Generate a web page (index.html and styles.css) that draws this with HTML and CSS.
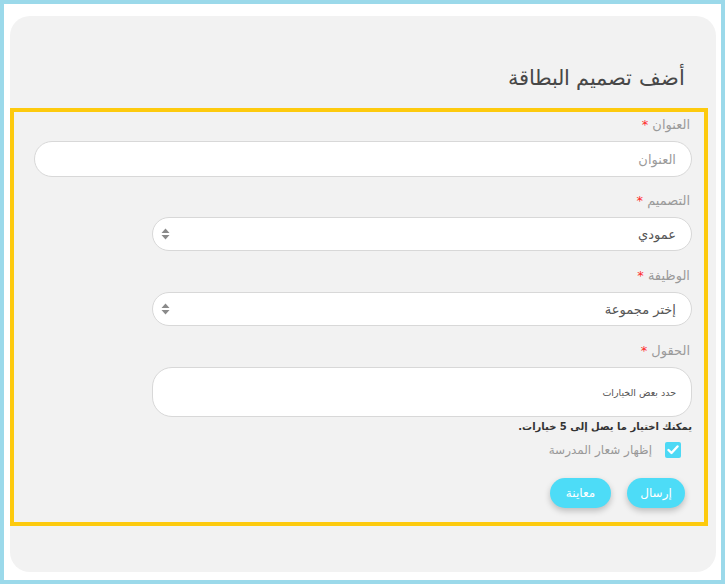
FILE: index.html
```html
<!DOCTYPE html>
<html lang="ar" dir="rtl">
<head>
<meta charset="utf-8">
<link rel="stylesheet" href="styles.css">
</head>
<body>
<div class="frame">
  <div class="panel">
    <h2 class="title">أضف تصميم البطاقة</h2>
    <form class="form-box">
      <div class="field">
        <label class="lbl">العنوان <span class="req">*</span></label>
        <div class="input wide"><span class="ph">العنوان</span></div>
      </div>
      <div class="field">
        <label class="lbl">التصميم <span class="req">*</span></label>
        <div class="input select"><span class="val">عمودي</span>
          <svg class="arrows" width="9" height="12" viewBox="0 0 9 12"><path d="M4.5 0.5 L8.5 5 L0.5 5 Z M0.5 7 L8.5 7 L4.5 11.5 Z" fill="#8a8a8a"/></svg>
        </div>
      </div>
      <div class="field">
        <label class="lbl">الوظيفة <span class="req">*</span></label>
        <div class="input select"><span class="val">إختر مجموعة</span>
          <svg class="arrows" width="9" height="12" viewBox="0 0 9 12"><path d="M4.5 0.5 L8.5 5 L0.5 5 Z M0.5 7 L8.5 7 L4.5 11.5 Z" fill="#8a8a8a"/></svg>
        </div>
      </div>
      <div class="field">
        <label class="lbl">الحقول <span class="req">*</span></label>
        <div class="input multi"><span class="ph-small">حدد بعض الخيارات</span></div>
        <p class="help">يمكنك اختيار ما يصل إلى 5 خيارات.</p>
      </div>
      <div class="check-row">
        <span class="checkbox"><svg width="12" height="10" viewBox="0 0 12 10"><path d="M1.5 5 L4.5 8 L10.5 1.5" fill="none" stroke="#fff" stroke-width="2.4" stroke-linecap="round" stroke-linejoin="round"/></svg></span>
        <span class="check-lbl">إظهار شعار المدرسة</span>
      </div>
      <div class="actions">
        <button type="button" class="btn send">إرسال</button>
        <button type="button" class="btn preview">معاينة</button>
      </div>
    </form>
  </div>
</div>
</body>
</html>
```

FILE: styles.css
```css
* { box-sizing: border-box; }
html, body { margin: 0; padding: 0; }
body {
  font-family: "DejaVu Sans", "Noto Sans", sans-serif;
  background: #fff;
}
.frame {
  height: 584px;
  border: 4px solid #9bd9ea;
  background: #fff;
  padding: 12px 5px 8px 6px;
}
.panel {
  height: 556px;
  background: #f2f2f2;
  border-radius: 20px;
  padding-top: 47px;
}
.title {
  margin: 0 31px 0 0;
  font-weight: 300;
  font-size: 21px;
  line-height: 30px;
  color: #484848;
  height: 45px;
}
.form-box {
  margin-right: 8px;
  border: 4px solid #fdca0e;
  padding: 3px 12px 0 20px;
  height: 418px;
}
.field { display: flex; flex-direction: column; align-items: flex-start; }
.lbl {
  font-size: 13px;
  line-height: 20px;
  color: #9a9a9a;
  padding-right: 2px;
  margin-bottom: 6px;
}
.req { color: #ff2a2a; font-size: 13px; }
.input {
  background: #fff;
  border: 1px solid #d8d8d8;
  border-radius: 18px;
  display: flex;
  align-items: center;
  padding: 0 15px;
}
.wide { width: 658px; height: 36px; margin-bottom: 14px; }
.select { width: 540px; height: 34px; margin-bottom: 15px; justify-content: space-between; padding-left: 8px; }
.multi { width: 540px; height: 50px; border-radius: 20px; }
.ph { font-size: 13px; color: #9a9a9a; }
.val { font-size: 13px; color: #555; }
.ph-small { font-size: 9.5px; color: #555; }
.arrows { display: block; }
.help {
  margin: 2px 0 0 0;
  font-size: 10px;
  line-height: 16px;
  font-weight: bold;
  color: #333;
}
.check-row {
  display: flex;
  align-items: center;
  gap: 13px;
  margin-top: 7px;
  padding-right: 11px;
}
.checkbox {
  width: 16px;
  height: 16px;
  background: #4dd9f5;
  border-radius: 2px;
  display: flex;
  align-items: center;
  justify-content: center;
}
.check-lbl { font-size: 12px; color: #999; }
.actions {
  display: flex;
  gap: 16px;
  margin-top: 20px;
  padding-right: 7px;
}
.btn {
  font-family: "DejaVu Sans", sans-serif;
  height: 30px;
  border: none;
  border-radius: 15px;
  background: #4ddcf7;
  color: #fff;
  font-size: 12px;
  padding: 0;
  box-shadow: 0 3px 6px rgba(0,0,0,0.22);
}
.send { width: 58px; }
.preview { width: 61px; }
```
